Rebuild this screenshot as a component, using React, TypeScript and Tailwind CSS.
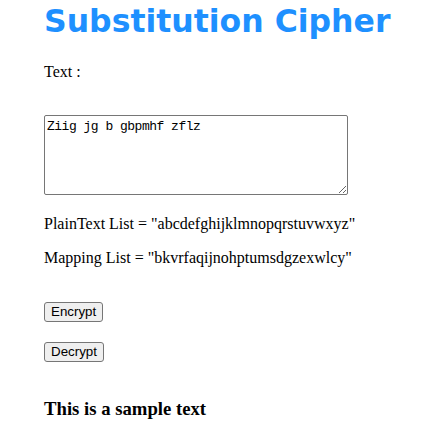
import React, { useState } from "react"

const PLAIN = "abcdefghijklmnopqrstuvwxyz"
const MAPPING = "bkvrfaqijnohptumsdgzexwlcy"

function substitute(text: string, from: string, to: string) {
  return text
    .split("")
    .map((ch) => {
      const lower = ch.toLowerCase()
      const idx = from.indexOf(lower)
      if (idx === -1) return ch
      const out = to[idx]
      return ch === lower ? out : out.toUpperCase()
    })
    .join("")
}

export default function App() {
  const [text, setText] = useState("Ziig jg b gbpmhf zflz")
  const [result, setResult] = useState("This is a sample text")

  const btn =
    "h-[20px] px-[6px] border border-[#767676] rounded-[3px] bg-[#efefef] text-[13.33px] leading-[16px] text-black font-['Liberation_Sans',Arial,sans-serif]"

  return (
    <div className="pl-[44px] pr-4 text-black bg-white min-h-[425px] font-['Liberation_Serif',serif] text-[16px]">
      <h1 className="pt-[1px] text-[31.5px] leading-[40px] font-bold text-[#1e90ff] font-['DejaVu_Sans',Verdana,sans-serif]">
        Substitution Cipher
      </h1>
      <p className="mt-[21px] leading-[20px]">Text :</p>
      <textarea
        value={text}
        onChange={(e) => setText(e.target.value)}
        spellCheck={true}
        className="mt-[33px] block w-[304px] h-[80px] border border-[#767676] rounded-[2px] px-[2px] pt-[3px] text-[13px] tracking-[-0.5px] leading-[16px] font-['Liberation_Mono',monospace] text-black outline-none"
      />
      <p className="mt-[19px] leading-[20px]">PlainText List = "{PLAIN}"</p>
      <p className="mt-[14px] leading-[20px]">Mapping List = "{MAPPING}"</p>
      <div className="mt-[34px] flex flex-col items-start gap-[20px]">
        <button onClick={() => setResult(substitute(text, PLAIN, MAPPING))} className={btn}>
          Encrypt
        </button>
        <button onClick={() => setResult(substitute(text, MAPPING, PLAIN))} className={btn}>
          Decrypt
        </button>
      </div>
      <h3 className="mt-[36px] text-[18.72px] leading-[22px] font-bold">{result}</h3>
    </div>
  )
}
